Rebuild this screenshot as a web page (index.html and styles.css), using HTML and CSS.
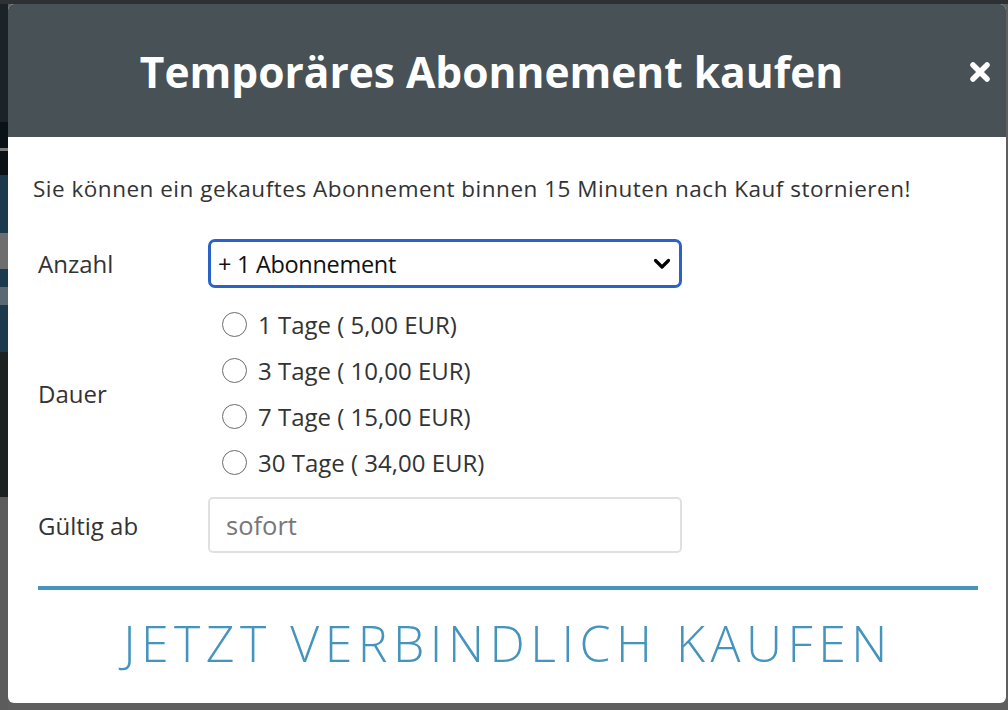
FILE: index.html
```html
<!DOCTYPE html>
<html lang="de">
<head>
    <meta charset="UTF-8">
    <meta name="viewport" content="width=device-width, initial-scale=1.0">
    <title>Temporäres Abonnement kaufen</title>
    <link rel="stylesheet" href="styles.css">
</head>
<body>
    <div class="backdrop">
        <div class="strip">
            <div class="strip-a"></div>
            <div class="strip-b"><span class="mark"></span></div>
            <div class="strip-c"><span class="chunk"></span><span class="chunk small"></span></div>
            <div class="strip-d"></div>
            <div class="strip-e"></div>
        </div>
    </div>

    <div class="modal">
        <div class="modal-header">
            <h1>Temporäres Abonnement kaufen</h1>
            <button class="close" aria-label="Schließen">
                <svg width="22" height="22" viewBox="0 0 22 22">
                    <path d="M4 4 L18 18 M18 4 L4 18" stroke="#fff" stroke-width="5.5" stroke-linecap="round"/>
                </svg>
            </button>
        </div>

        <div class="modal-body">
            <p class="notice">Sie können ein gekauftes Abonnement binnen 15 Minuten nach Kauf stornieren!</p>

            <div class="row row-anzahl">
                <label class="row-label" for="anzahl">Anzahl</label>
                <div class="select-wrap">
                    <select id="anzahl">
                        <option>+ 1 Abonnement</option>
                        <option>+ 2 Abonnements</option>
                    </select>
                    <svg class="chevron" width="18" height="12" viewBox="0 0 18 12">
                        <path d="M2.5 2.5 L9 9 L15.5 2.5" fill="none" stroke="#000" stroke-width="3.2" stroke-linecap="round" stroke-linejoin="round"/>
                    </svg>
                </div>
            </div>

            <div class="row row-dauer">
                <span class="row-label">Dauer</span>
                <div class="options">
                    <label class="option"><input type="radio" name="dauer"> 1 Tage ( 5,00 EUR)</label>
                    <label class="option"><input type="radio" name="dauer"> 3 Tage ( 10,00 EUR)</label>
                    <label class="option"><input type="radio" name="dauer"> 7 Tage ( 15,00 EUR)</label>
                    <label class="option"><input type="radio" name="dauer"> 30 Tage ( 34,00 EUR)</label>
                </div>
            </div>

            <div class="row">
                <label class="row-label" for="ab">Gültig ab</label>
                <input id="ab" class="text-input" type="text" placeholder="sofort">
            </div>

            <button class="buy">JETZT VERBINDLICH KAUFEN</button>
        </div>
    </div>
</body>
</html>
```

FILE: styles.css
```css
* {
    box-sizing: border-box;
}

html, body {
    margin: 0;
    height: 100%;
}

body {
    font-family: 'Open Sans', 'Noto Sans', sans-serif;
    background-color: #5f5f5f;
    overflow: hidden;
}

.backdrop {
    height: 100%;
    border-top: 4px solid #2d3133;
}

.strip {
    width: 8px;
    height: 100%;
    display: flex;
    flex-direction: column;
}

.strip-a {
    height: 118px;
    background: #1b2328;
}

.strip-b {
    height: 53px;
    background: #0b1217;
    padding-top: 26px;
}

.mark {
    display: block;
    height: 3px;
    background: #7a7a7a;
}

.strip-c {
    height: 177px;
    background: #1b3a4d;
    padding-top: 58px;
}

.chunk {
    display: block;
    height: 36px;
    background: #6e6e6e;
    margin-bottom: 18px;
}

.chunk.small {
    height: 18px;
    background: #5a6a74;
}

.strip-d {
    height: 145px;
    background: #1c2222;
}

.strip-e {
    flex: 1;
    background: #5c5c5c;
}

/* modal */

.modal {
    position: absolute;
    left: 8px;
    top: 4px;
    width: 998px;
    height: 699px;
    background: #fff;
    border-radius: 6px;
    overflow: hidden;
}

.modal-header {
    height: 133px;
    background: #475156;
    display: flex;
    align-items: center;
    justify-content: center;
    padding-right: 31px;
    position: relative;
}

.modal-header h1 {
    margin: 0;
    color: #fff;
    font-size: 42.5px;
    font-weight: 700;
    padding-top: 2px;
}

.close {
    position: absolute;
    right: 15px;
    top: 57px;
    background: none;
    border: none;
    padding: 0;
    width: 22px;
    height: 22px;
    cursor: pointer;
}

.close svg {
    display: block;
}

.modal-body {
    padding: 36px 28px 0 25px;
    color: #333;
}

.notice {
    margin: 0 0 35px;
    font-size: 22.5px;
    line-height: 31px;
    letter-spacing: 0.5px;
}

.row {
    display: flex;
    align-items: center;
    padding-left: 5px;
}

.row-anzahl {
    margin-bottom: 19px;
}

.row-dauer {
    margin-bottom: 18px;
}

.row-label {
    width: 170px;
    font-size: 24px;
    color: #333;
}

.select-wrap {
    position: relative;
    width: 474px;
}

.select-wrap select {
    appearance: none;
    -webkit-appearance: none;
    display: block;
    width: 100%;
    height: 49px;
    border: 3px solid #2a63c8;
    border-radius: 7px;
    background: #fff;
    padding: 0 7px;
    font-family: inherit;
    font-size: 23.5px;
    letter-spacing: -0.3px;
    color: #111;
    outline: none;
}

.chevron {
    position: absolute;
    right: 11px;
    top: 19px;
    pointer-events: none;
}

.options {
    display: flex;
    flex-direction: column;
    gap: 12px;
    padding-left: 14px;
}

.option {
    display: flex;
    align-items: center;
    gap: 11px;
    font-size: 24px;
    color: #333;
    height: 34px;
}

.option input {
    appearance: none;
    -webkit-appearance: none;
    width: 25px;
    height: 25px;
    margin: 0;
    border: 1.6px solid #6c6c6c;
    border-radius: 50%;
    background: #fff;
}

.text-input {
    width: 474px;
    height: 56px;
    border: 2px solid #e0e0e0;
    border-radius: 5px;
    padding: 0 16px;
    font-family: inherit;
    font-size: 25.5px;
    color: #333;
    outline: none;
}

.text-input::placeholder {
    color: #777;
}

.buy {
    display: block;
    width: 940px;
    margin: 33px 0 0 5px;
    padding: 19px 0 0;
    background: none;
    border: none;
    border-top: 4px solid #4594bd;
    font-family: inherit;
    font-size: 50px;
    line-height: normal;
    font-weight: 300;
    letter-spacing: 5.5px;
    color: #4594bd;
    cursor: pointer;
}
```
